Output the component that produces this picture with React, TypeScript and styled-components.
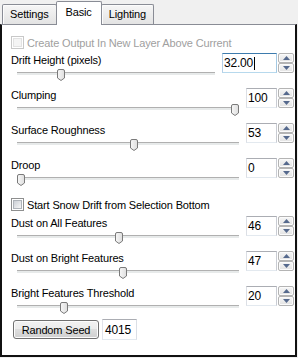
import React from 'react';
import styled, { createGlobalStyle } from 'styled-components';

const GlobalStyle = createGlobalStyle`
  html, body {
    margin: 0;
    padding: 0;
    background: #f0f0f0;
  }
  body {
    font-family: "Liberation Sans", Arial, sans-serif;
    font-size: 11px;
    letter-spacing: -0.15px;
    color: #000;
  }
`;

type RowData = {
  label: string;
  value: string;
  pos: number;
  wide?: boolean;
  focused?: boolean;
};

const topRows: RowData[] = [
  { label: 'Drift Height (pixels)', value: '32.00', pos: 0.21, wide: true, focused: true },
  { label: 'Clumping', value: '100', pos: 1 },
  { label: 'Surface Roughness', value: '53', pos: 0.53 },
  { label: 'Droop', value: '0', pos: 0 },
];

const bottomRows: RowData[] = [
  { label: 'Dust on All Features', value: '46', pos: 0.46 },
  { label: 'Dust on Bright Features', value: '47', pos: 0.475 },
  { label: 'Bright Features Threshold', value: '20', pos: 0.2 },
];

const Arrow: React.FC<{ down?: boolean }> = ({ down }) => (
  <svg width="7" height="4" viewBox="0 0 7 4">
    <path d={down ? 'M0 0 L7 0 L3.5 4 Z' : 'M0 4 L3.5 0 L7 4 Z'} fill="#55698d" />
  </svg>
);

const ThumbShape = () => (
  <svg width="8" height="12" viewBox="0 0 8 12">
    <defs>
      <linearGradient id="tg" x1="0" y1="0" x2="1" y2="0">
        <stop offset="0" stopColor="#f7f7f7" />
        <stop offset="1" stopColor="#dedede" />
      </linearGradient>
    </defs>
    <path
      d="M0.5 2 Q0.5 0.5 2 0.5 H6 Q7.5 0.5 7.5 2 V9 L4 11.5 L0.5 9 Z"
      fill="url(#tg)"
      stroke="#7a7a7a"
    />
  </svg>
);

const SliderRow: React.FC<RowData> = ({ label, value, pos, wide, focused }) => (
  <Row>
    <Label>{label}</Label>
    <Slider>
      <Track />
      <Thumb style={{ left: `calc(${pos} * (100% - 8px))` }}>
        <ThumbShape />
      </Thumb>
    </Slider>
    <Spinner>
      <NumberBox $wide={wide} $focused={focused}>
        {value}
        {focused && <Caret />}
      </NumberBox>
      <SpinButtons>
        <SpinButton><Arrow /></SpinButton>
        <SpinButton><Arrow down /></SpinButton>
      </SpinButtons>
    </Spinner>
  </Row>
);

const App: React.FC = () => {
  return (
    <Page>
      <GlobalStyle />
      <TabStrip>
        <Tab>Settings</Tab>
        <Tab $active>Basic</Tab>
        <Tab>Lighting</Tab>
      </TabStrip>
      <Panel>
        <CheckRow $disabled $gapBelow={4}>
          <CheckBox $disabled />
          Create Output In New Layer Above Current
        </CheckRow>
        {topRows.map((r) => (
          <SliderRow key={r.label} {...r} />
        ))}
        <CheckRow $gapAbove={5} $gapBelow={5}>
          <CheckBox />
          Start Snow Drift from Selection Bottom
        </CheckRow>
        {bottomRows.map((r) => (
          <SliderRow key={r.label} {...r} />
        ))}
        <SeedRow>
          <SeedButton>Random Seed</SeedButton>
          <SeedBox>4015</SeedBox>
        </SeedRow>
      </Panel>
    </Page>
  );
};

export default App;

const Page = styled.div`
  width: 298px;
  height: 358px;
  background: #f0f0f0;
  overflow: hidden;
`;

const TabStrip = styled.div`
  display: flex;
  align-items: flex-end;
  height: 24px;
  padding-left: 2px;
`;

const Tab = styled.div<{ $active?: boolean }>`
  box-sizing: border-box;
  position: relative;
  z-index: ${(p) => (p.$active ? 2 : 1)};
  height: ${(p) => (p.$active ? '24px' : '20px')};
  margin-bottom: ${(p) => (p.$active ? '-1px' : '0')};
  padding: ${(p) => (p.$active ? '4px 9px 0' : '3px 7px 0')};
  margin-left: -1px;
  border: 1px solid #898c95;
  border-bottom: none;
  border-radius: 2px 2px 0 0;
  background: ${(p) => (p.$active ? '#fff' : 'linear-gradient(#f6f6f6, #e3e3e3)')};
  box-shadow: ${(p) => (p.$active ? 'none' : 'inset 1px 1px 0 #fcfcfc')};
  line-height: 13px;
  white-space: nowrap;

  &:first-child {
    margin-left: 0;
  }
`;

const Panel = styled.div`
  box-sizing: border-box;
  width: 297px;
  height: 333px;
  background: #fff;
  border-top: 1px solid #898c95;
  border-left: 2px solid #111;
  border-right: 2px solid #111;
  border-bottom: 2px solid #111;
  padding: 11px 1px 0 9px;
`;

const CheckRow = styled.div<{ $disabled?: boolean; $gapAbove?: number; $gapBelow?: number }>`
  display: flex;
  align-items: center;
  gap: 3px;
  height: 13px;
  margin-top: ${(p) => p.$gapAbove ?? 0}px;
  margin-bottom: ${(p) => p.$gapBelow ?? 0}px;
  color: ${(p) => (p.$disabled ? '#a0a0a0' : '#000')};
  white-space: nowrap;
`;

const CheckBox = styled.span<{ $disabled?: boolean }>`
  box-sizing: border-box;
  display: flex;
  flex: none;
  width: 13px;
  height: 13px;
  padding: 1px;
  border: 1px solid ${(p) => (p.$disabled ? '#c8c8c8' : '#8e8f8f')};
  background: #fff;

  &::after {
    content: '';
    flex: 1;
    border: 1px solid ${(p) => (p.$disabled ? '#e2e2e2' : '#aeb3b9')};
    background: ${(p) =>
      p.$disabled ? '#f4f4f4' : 'linear-gradient(135deg, #cbcfd5, #f6f6f6)'};
  }
`;

const Row = styled.div`
  display: grid;
  grid-template-columns: 1fr auto;
  grid-template-rows: 14px 21px;
  column-gap: 7px;
  height: 35px;
`;

const Label = styled.div`
  grid-column: 1;
  grid-row: 1;
  line-height: 14px;
  white-space: nowrap;
`;

const Slider = styled.div`
  grid-column: 1;
  grid-row: 2;
  position: relative;
  margin-left: 6px;
`;

const Track = styled.div`
  box-sizing: border-box;
  margin-top: 5px;
  height: 3px;
  border-top: 1px solid #b0b0b0;
  background: #e7eaea;
`;

const Thumb = styled.div`
  position: absolute;
  top: 2px;
  width: 8px;
  height: 12px;
  line-height: 0;
`;

const Spinner = styled.div`
  grid-column: 2;
  grid-row: 1 / span 2;
  align-self: start;
  display: flex;
  gap: 1px;
  height: 20px;
`;

const NumberBox = styled.div<{ $wide?: boolean; $focused?: boolean }>`
  box-sizing: border-box;
  display: flex;
  align-items: center;
  width: ${(p) => (p.$wide ? '55px' : '31px')};
  height: 20px;
  padding-left: 1px;
  border: 1px solid;
  border-color: ${(p) =>
    p.$focused ? '#3d7bad #a4c9e3 #b7d9ed #b5cfe7' : '#abadb3 #c9ccd3 #e3e9ef #dcdfe5'};
  background: #fff;
  font-size: 12px;
  letter-spacing: -0.2px;
`;

const Caret = styled.span`
  width: 1px;
  height: 13px;
  margin-left: 1px;
  background: #000;
`;

const SpinButtons = styled.div`
  display: flex;
  flex-direction: column;
  width: 16px;
`;

const SpinButton = styled.div`
  box-sizing: border-box;
  display: flex;
  align-items: center;
  justify-content: center;
  height: 10px;
  border: 1px solid #b4b4b4;
  border-radius: 2px;
  background: linear-gradient(#f7f7f7, #e2e2e2);
  box-shadow: inset 0 0 0 1px #fbfbfb;
`;

const SeedRow = styled.div`
  display: flex;
  align-items: center;
  gap: 3px;
  height: 21px;
  margin-top: -2px;
`;

const SeedButton = styled.button`
  box-sizing: border-box;
  width: 86px;
  height: 19px;
  margin: 0 0 0 2px;
  padding: 0;
  border: 1px solid #707070;
  border-radius: 3px;
  background: linear-gradient(#f2f2f2 0%, #ebebeb 50%, #dddddd 50%, #cfcfcf 100%);
  box-shadow: inset 0 0 0 1px #fcfcfc;
  font: inherit;
  letter-spacing: inherit;
  color: #000;
`;

const SeedBox = styled.div`
  box-sizing: border-box;
  display: flex;
  align-items: center;
  width: 35px;
  height: 21px;
  padding-left: 2px;
  border: 1px solid;
  border-color: #abadb3 #dbdfe6 #e3e9ef #e2e3ea;
  font-size: 12px;
  letter-spacing: -0.2px;
`;
